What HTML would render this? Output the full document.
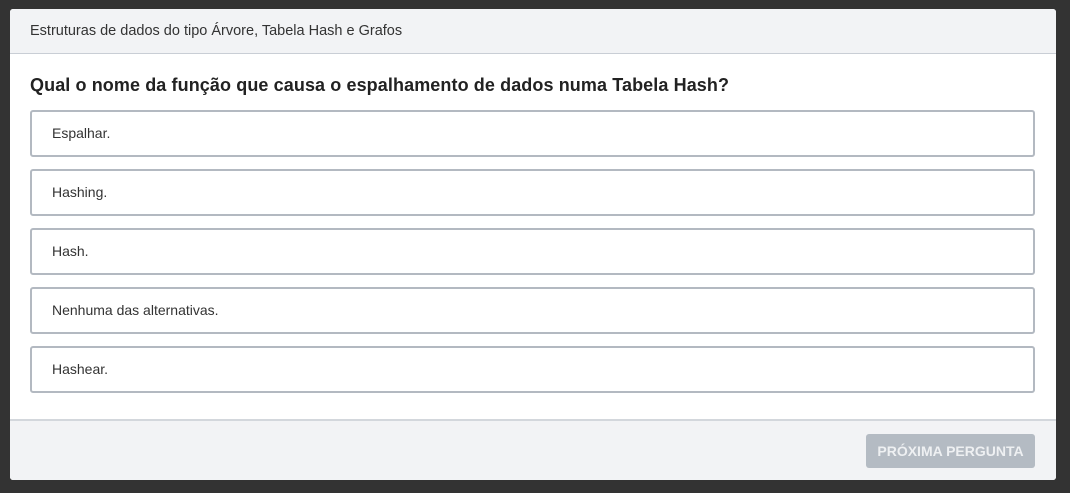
<!DOCTYPE html>
<html><head><style>
body{margin:0;width:1070px;height:493px;background:#333;font-family:"Liberation Sans","DejaVu Sans",sans-serif;position:relative;overflow:hidden}
.card{position:absolute;left:10px;top:9px;width:1046px;height:471px;background:#fff;border-radius:3px;overflow:hidden}
.hd{background:#f2f3f5;border-bottom:1px solid #c9ced5;font-size:14.5px;color:#333;line-height:44px;padding-left:20px;box-sizing:border-box;height:45px}
.q{position:absolute;left:20px;top:66px;font-size:18px;letter-spacing:0.1px;font-weight:bold;color:#222}
.opt{position:absolute;left:20px;width:1005px;height:47px;box-sizing:border-box;border:2px solid #b3b9c1;border-radius:3px;font-size:14px;color:#333;line-height:43px;padding-left:20px}
.ft{position:absolute;left:0;top:410px;width:100%;height:61px;background:#f2f3f5;border-top:2px solid #d3d7dc}
.btn{position:absolute;left:856px;top:13px;width:169px;height:34px;background:#b4bbc3;border-radius:3px;color:#eef0f2;font-weight:bold;font-size:14px;text-align:center;line-height:34px}
</style></head><body>
<div class="card">
<div class="hd">Estruturas de dados do tipo Árvore, Tabela Hash e Grafos</div>
<div class="q">Qual o nome da função que causa o espalhamento de dados numa Tabela Hash?</div>
<div class="opt" style="top:101px">Espalhar.</div>
<div class="opt" style="top:160px">Hashing.</div>
<div class="opt" style="top:219px">Hash.</div>
<div class="opt" style="top:278px">Nenhuma das alternativas.</div>
<div class="opt" style="top:337px">Hashear.</div>
<div class="ft"><div class="btn">PRÓXIMA PERGUNTA</div></div>
</div>
</body></html>
